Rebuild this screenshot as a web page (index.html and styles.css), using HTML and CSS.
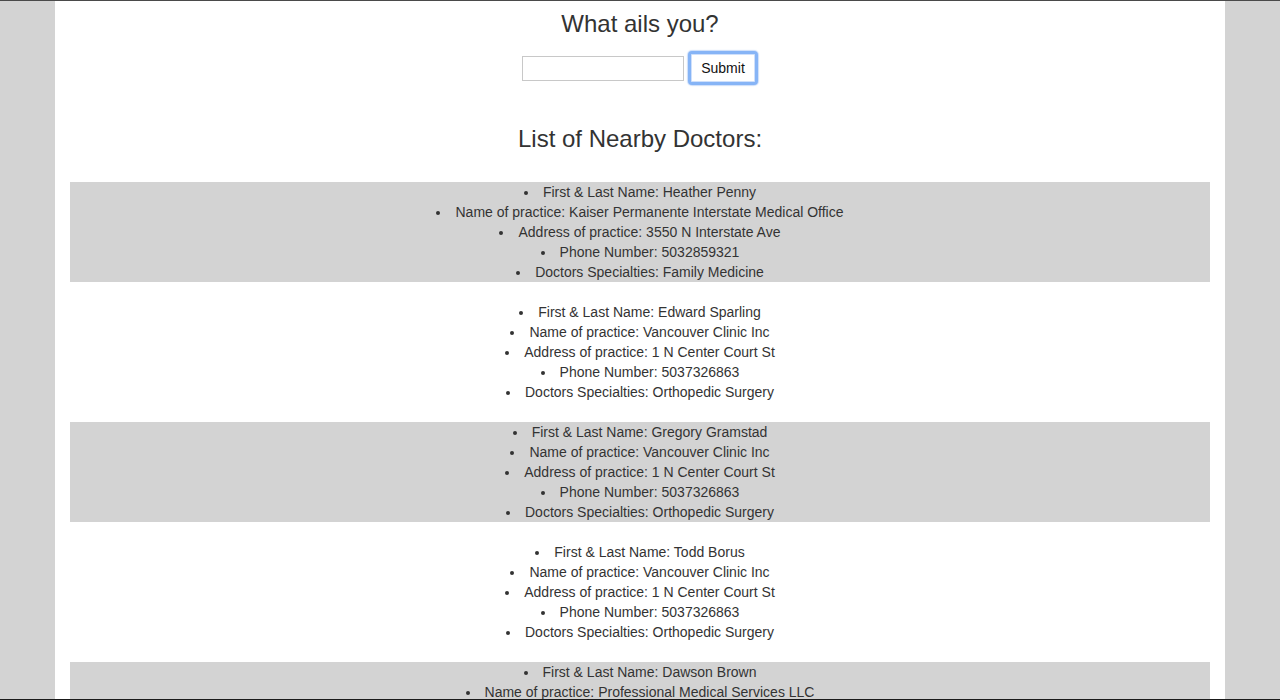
FILE: index.html
```html
<!DOCTYPE html>
<html>
<head>
<meta charset="utf-8">
<title>What ails you?</title>
<link rel="stylesheet" href="styles.css">
</head>
<body>
<div class="frame"></div>
<div class="container">
  <h3 class="title">What ails you?</h3>
  <form class="search">
    <input class="search-input" type="text">
    <button class="submit" type="button">Submit</button>
  </form>
  <h3 class="list-title">List of Nearby Doctors:</h3>
  <div class="doctors">
    <ul class="doctor">
      <li>First &amp; Last Name: Heather Penny</li>
      <li>Name of practice: Kaiser Permanente Interstate Medical Office</li>
      <li>Address of practice: 3550 N Interstate Ave</li>
      <li>Phone Number: 5032859321</li>
      <li>Doctors Specialties: Family Medicine</li>
    </ul>
    <ul class="doctor">
      <li>First &amp; Last Name: Edward Sparling</li>
      <li>Name of practice: Vancouver Clinic Inc</li>
      <li>Address of practice: 1 N Center Court St</li>
      <li>Phone Number: 5037326863</li>
      <li>Doctors Specialties: Orthopedic Surgery</li>
    </ul>
    <ul class="doctor">
      <li>First &amp; Last Name: Gregory Gramstad</li>
      <li>Name of practice: Vancouver Clinic Inc</li>
      <li>Address of practice: 1 N Center Court St</li>
      <li>Phone Number: 5037326863</li>
      <li>Doctors Specialties: Orthopedic Surgery</li>
    </ul>
    <ul class="doctor">
      <li>First &amp; Last Name: Todd Borus</li>
      <li>Name of practice: Vancouver Clinic Inc</li>
      <li>Address of practice: 1 N Center Court St</li>
      <li>Phone Number: 5037326863</li>
      <li>Doctors Specialties: Orthopedic Surgery</li>
    </ul>
    <ul class="doctor">
      <li>First &amp; Last Name: Dawson Brown</li>
      <li>Name of practice: Professional Medical Services LLC</li>
      <li>Address of practice: 1 N Center Court St</li>
      <li>Phone Number: 5037326863</li>
      <li>Doctors Specialties: Orthopedic Surgery</li>
    </ul>
  </div>
</div>
</body>
</html>
```

FILE: styles.css
```css
html, body {
  margin: 0;
  padding: 0;
}
body {
  background: #d3d3d3;
  font-family: "Liberation Sans", Arial, Helvetica, sans-serif;
  font-size: 14px;
  line-height: 20px;
  color: #333;
}
.frame {
  position: fixed;
  left: 0;
  top: 0;
  right: 0;
  bottom: 0;
  border-top: 1px solid #4a4a4a;
  border-bottom: 1px solid #1a1a1a;
  pointer-events: none;
  z-index: 10;
}
.container {
  width: 1140px;
  margin: 0 auto;
  padding: 1px 15px 0;
  background: #fff;
  text-align: center;
  min-height: 100vh;
}
.title, .list-title {
  font-size: 24px;
  font-weight: 400;
  line-height: 26px;
  margin: 0;
}
.title {
  margin-top: 10px;
}
.search {
  display: flex;
  justify-content: center;
  align-items: center;
  gap: 4px;
  margin-top: 14px;
}
.search-input {
  box-sizing: border-box;
  width: 162px;
  height: 25px;
  border: 1px solid #c8c8c8;
  border-radius: 0;
  margin: 0;
  padding: 2px 4px;
  font: inherit;
}
.submit {
  box-sizing: border-box;
  width: 70px;
  height: 34px;
  margin: 0;
  padding: 0;
  background: #fff;
  border: 3px solid #86b4f6;
  border-radius: 4px;
  box-shadow: 0 0 1px 1px rgba(110, 160, 240, 0.35), inset 0 0 0 1px #cfe0fb;
  font-family: "Liberation Sans", Arial, Helvetica, sans-serif;
  font-size: 14px;
  color: #111;
}
.list-title {
  margin-top: 41px;
  margin-bottom: 30px;
}
.doctor {
  list-style: disc inside;
  margin: 0 0 20px;
  padding: 0;
}
.doctor:nth-child(odd) {
  background: #d3d3d3;
}
```
